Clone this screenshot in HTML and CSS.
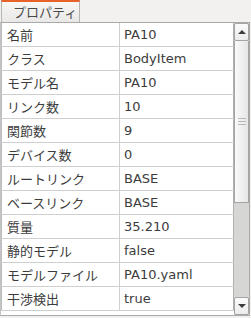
FILE: index.html
```html
<!DOCTYPE html>
<html lang="ja">
<head>
<meta charset="UTF-8">
<title>プロパティ</title>
<link rel="stylesheet" href="styles.css">
</head>
<body>

<div class="tabs">
    <div class="tab">プロパティ</div>
</div>

<div class="pane">
    <table class="props">
        <tr><td>名前</td><td>PA10</td></tr>
        <tr><td>クラス</td><td>BodyItem</td></tr>
        <tr><td>モデル名</td><td>PA10</td></tr>
        <tr><td>リンク数</td><td>10</td></tr>
        <tr><td>関節数</td><td>9</td></tr>
        <tr><td>デバイス数</td><td>0</td></tr>
        <tr><td>ルートリンク</td><td>BASE</td></tr>
        <tr><td>ベースリンク</td><td>BASE</td></tr>
        <tr><td>質量</td><td>35.210</td></tr>
        <tr><td>静的モデル</td><td>false</td></tr>
        <tr><td>モデルファイル</td><td>PA10.yaml</td></tr>
        <tr><td>干渉検出</td><td>true</td></tr>
    </table>

    <div class="scrollbar">
        <div class="sb-btn"><span class="arrow up"></span></div>
        <div class="sb-track">
            <div class="sb-thumb"><span class="grip"></span></div>
        </div>
        <div class="sb-btn"><span class="arrow down"></span></div>
    </div>
</div>

</body>
</html>
```

FILE: styles.css
```css
body {
    margin: 0;
    padding: 0;
    background: #f2f1f0;
    font-family: "DejaVu Sans", "Noto Sans CJK JP", sans-serif;
    font-size: 13px;
    color: #3c3c3c;
    width: 251px;
    height: 318px;
    overflow: hidden;
}

.tabs {
    display: flex;
    height: 22px;
    padding-left: 1px;
}

.tab {
    width: 79px;
    box-sizing: border-box;
    border-top: 2px solid #e8622c;
    border-left: 1px solid #b4b4b4;
    border-right: 1px solid #b4b4b4;
    background: linear-gradient(#f7f7f6, #e9e8e7);
    padding-left: 11px;
    line-height: 20px;
    font-family: "Noto Sans CJK JP", sans-serif;
    color: #4a4a4a;
}

.pane {
    display: flex;
    width: 250px;
    height: 294px;
    box-sizing: border-box;
    border: 1px solid #a9a9a9;
    border-left-color: #c4c4c4;
    background: #fff;
}

.props {
    flex: 1;
    align-self: flex-start;
    border-collapse: collapse;
    border-left: 1px solid #bdbdbd;
}

.props td {
    height: 23px;
    padding: 0;
    border-bottom: 1px solid #cfcfcf;
    white-space: nowrap;
}

.props td:first-child {
    width: 112px;
    padding-left: 5px;
    border-right: 1px solid #cfcfcf;
    font-family: "Noto Sans CJK JP", sans-serif;
}

.props td:last-child {
    padding-left: 4px;
    border-right: 1px solid #b0b0b0;
}

.scrollbar {
    width: 15px;
    display: flex;
    flex-direction: column;
    background: #d6d6d5;
}

.sb-btn {
    height: 18px;
    box-sizing: border-box;
    border: 1px solid #a4a4a4;
    border-radius: 2px;
    background: linear-gradient(#fbfbfb, #ececec);
    display: flex;
    align-items: center;
    justify-content: center;
}

.sb-track {
    flex: 1;
}

.sb-thumb {
    height: 162px;
    box-sizing: border-box;
    border: 1px solid #a4a4a4;
    border-top: none;
    background: linear-gradient(90deg, #fafafa, #e6e6e6);
    display: flex;
    align-items: center;
    justify-content: center;
}

.grip {
    width: 8px;
    height: 5px;
    border-top: 1px solid #b8b8b8;
    border-bottom: 1px solid #b8b8b8;
    background: linear-gradient(transparent 2px, #b8b8b8 2px, #b8b8b8 3px, transparent 3px);
}

.arrow {
    width: 0;
    height: 0;
    border-left: 4px solid transparent;
    border-right: 4px solid transparent;
}

.arrow.up {
    border-bottom: 4px solid #3c3c3c;
}

.arrow.down {
    border-top: 4px solid #3c3c3c;
}
```
